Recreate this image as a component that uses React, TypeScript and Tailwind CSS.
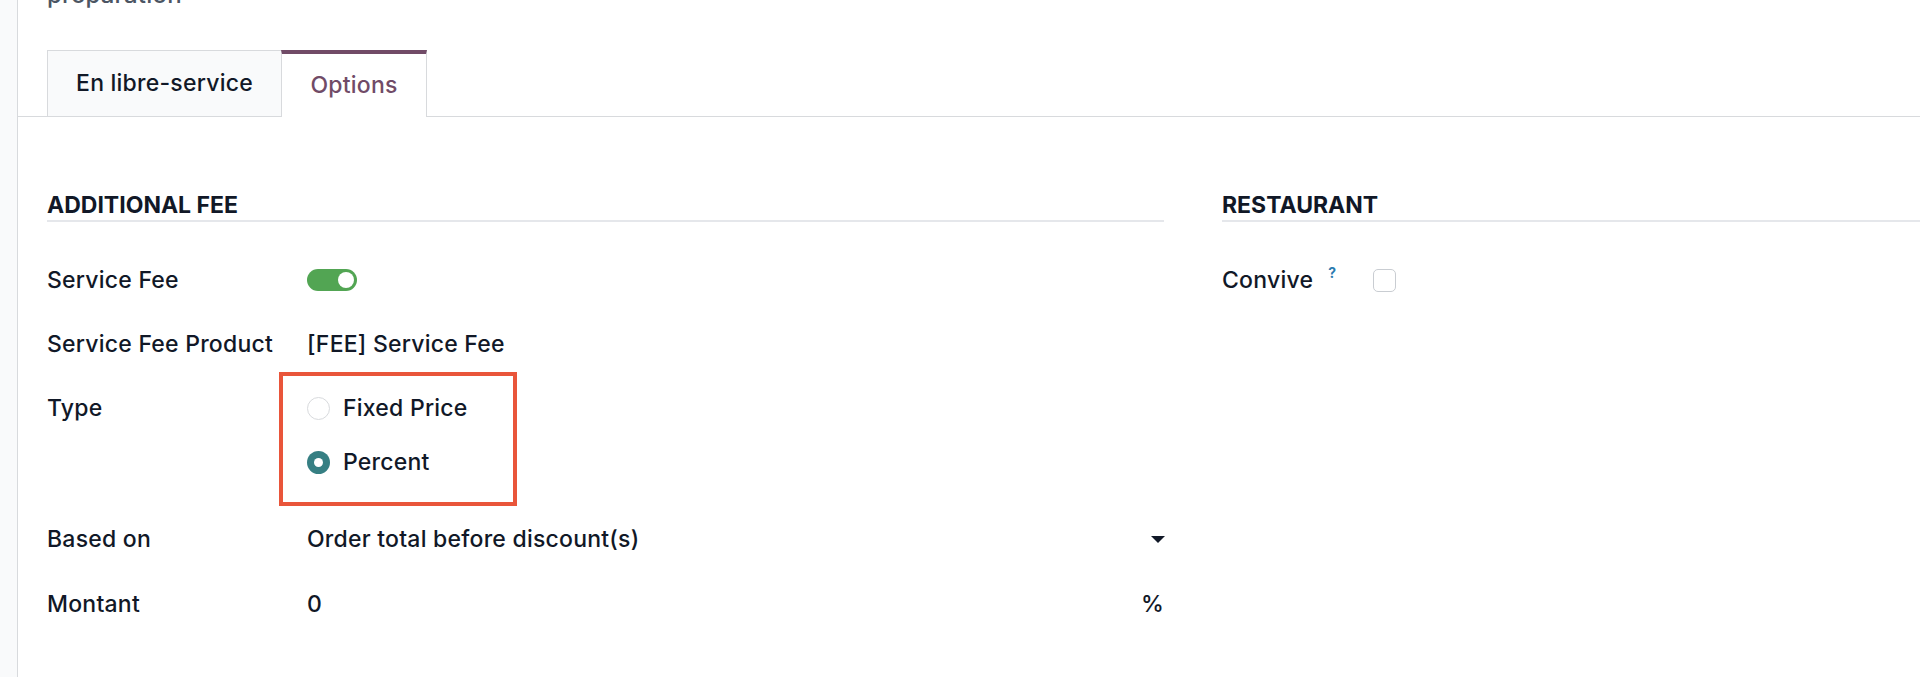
import React from "react";

const font = { fontFamily: 'Inter, "Noto Sans", sans-serif' };

function Row({ label, children, pb = "pb-[32px]" }: { label: React.ReactNode; children?: React.ReactNode; pb?: string }) {
  return (
    <div className={`grid grid-cols-[260px_1fr] ${pb}`}>
      <div className="leading-[32px] text-[#111827]">{label}</div>
      <div className="leading-[32px] text-[#111827] relative">{children}</div>
    </div>
  );
}

function Radio({ checked, label }: { checked?: boolean; label: string }) {
  return (
    <div className="flex items-center h-[32px]">
      {checked ? (
        <span className="w-[23px] h-[23px] shrink-0 rounded-full bg-[#367f83] flex items-center justify-center">
          <span className="w-[9px] h-[9px] rounded-full bg-white" />
        </span>
      ) : (
        <span className="w-[23px] h-[23px] shrink-0 rounded-full border border-[#d8dadd] bg-white" />
      )}
      <span className="ml-[13px]">{label}</span>
    </div>
  );
}

export default function App() {
  return (
    <div
      className="w-[1920px] h-[677px] overflow-hidden bg-white flex text-[23px] font-medium tracking-[0.01em]"
      style={font}
    >
      <div className="w-[18px] shrink-0 bg-[#f9fafb] border-r border-[#d8dadd]" />
      <div className="flex-1 overflow-hidden flex flex-col">
        <div className="pl-[29px] mt-[-21px] h-[32px] leading-[32px] text-[#4b5563] text-[24px]">préparation</div>
        <div className="mt-[39px] flex border-b border-[#d8dadd] pl-[29px]">
          <div className="w-[234px] h-[66px] flex items-center justify-center bg-[#f9fafb] border-t border-l border-[#d8dadd] text-[#111827]">
            En libre-service
          </div>
          <div className="w-[146px] h-[67px] -mb-px flex items-center justify-center bg-white border-t-[4px] border-t-[#714b67] border-x border-x-[#d8dadd] text-[#714b67]">
            Options
          </div>
        </div>
        <div className="pl-[29px] pt-[73px] grid grid-cols-[1117px_1117px] gap-x-[58px]">
          <div>
            <div className="h-[32px] leading-[30px] font-bold tracking-normal uppercase text-[#111827] border-b-2 border-[#e5e7eb] mb-[42px]">
              Additional Fee
            </div>
            <Row label="Service Fee">
              <div className="h-[32px] flex items-center">
                <span className="w-[50px] h-[22px] rounded-full bg-[#52a553] flex items-center justify-end pr-[3px]">
                  <span className="w-[16px] h-[16px] rounded-full bg-white" />
                </span>
              </div>
            </Row>
            <Row label="Service Fee Product">[FEE] Service Fee</Row>
            <Row label="Type" pb="pb-[45px]">
              <div className="flex flex-col gap-[22px]">
                <Radio label="Fixed Price" />
                <Radio checked label="Percent" />
              </div>
              <div className="absolute left-[-28px] top-[-20px] w-[238px] h-[134px] border-[4px] border-[#e9553a] pointer-events-none" />
            </Row>
            <Row label="Based on" pb="pb-[33px]">
              <div className="flex items-center justify-between">
                <span>Order total before discount(s)</span>
                <svg width="14" height="7" viewBox="0 0 14 7" className="mr-[-1px]">
                  <path d="M0 0 H14 L7 7 Z" fill="#111827" />
                </svg>
              </div>
            </Row>
            <Row label="Montant">
              <div className="flex items-center justify-between">
                <span>0</span>
                <span>%</span>
              </div>
            </Row>
          </div>
          <div>
            <div className="h-[32px] leading-[30px] font-bold tracking-normal uppercase text-[#111827] border-b-2 border-[#e5e7eb] mb-[42px]">
              Restaurant
            </div>
            <div className="grid grid-cols-[151px_1fr]">
              <div className="leading-[32px] text-[#111827] flex items-start">
                <span>Convive</span>
                <span className="ml-[15px] text-[14px] font-bold leading-[14px] mt-[2px] text-[#2b7bb0]">?</span>
              </div>
              <div className="h-[32px] flex items-center">
                <span className="w-[23px] h-[23px] rounded-[5px] border border-[#c9cdd2] bg-white" />
              </div>
            </div>
          </div>
        </div>
      </div>
    </div>
  );
}
